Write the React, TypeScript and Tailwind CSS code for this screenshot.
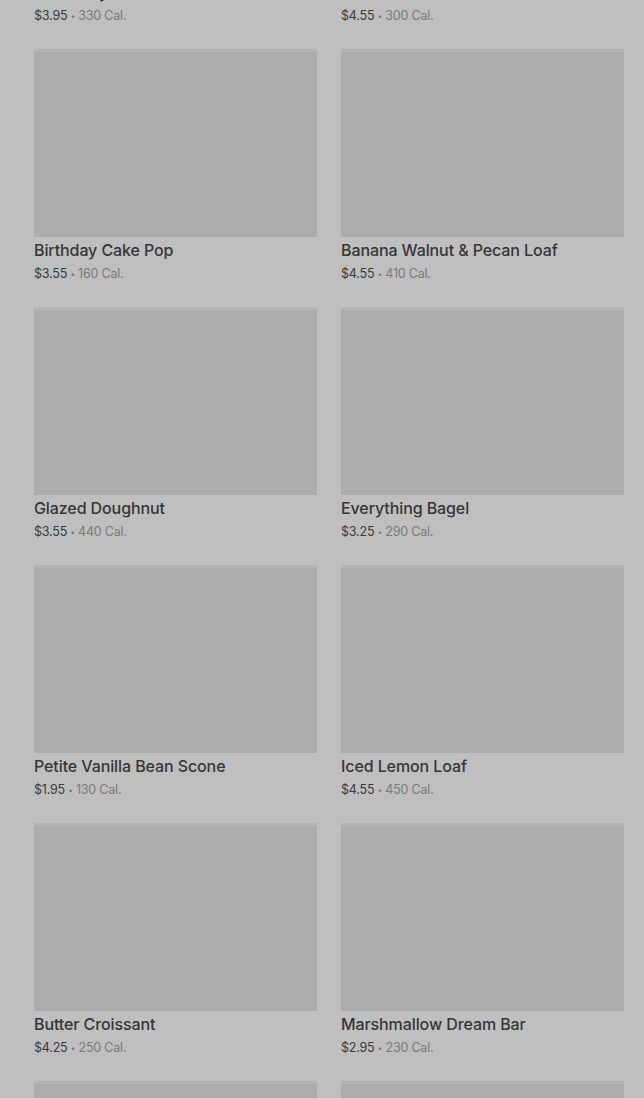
import React from 'react';

interface Item {
  name?: string;
  price?: string;
  cal?: number;
}

const items: Item[] = [
  { name: 'Blueberry Muffin', price: '$3.95', cal: 330 },
  { name: 'Chocolate Croissant', price: '$4.55', cal: 300 },
  { name: 'Birthday Cake Pop', price: '$3.55', cal: 160 },
  { name: 'Banana Walnut & Pecan Loaf', price: '$4.55', cal: 410 },
  { name: 'Glazed Doughnut', price: '$3.55', cal: 440 },
  { name: 'Everything Bagel', price: '$3.25', cal: 290 },
  { name: 'Petite Vanilla Bean Scone', price: '$1.95', cal: 130 },
  { name: 'Iced Lemon Loaf', price: '$4.55', cal: 450 },
  { name: 'Butter Croissant', price: '$4.25', cal: 250 },
  { name: 'Marshmallow Dream Bar', price: '$2.95', cal: 230 },
  {},
  {},
];

const ItemCard: React.FC<{ item: Item }> = ({ item }) => (
  <div className="flex flex-col pb-[25px]">
    <div className="h-[188px] bg-[#adadad] border-t-[3px] border-[#b4b4b4]" />
    {item.name && (
      <>
        <h3 className="mt-[2px] text-[16px] leading-[22px] font-medium text-[#363636] tracking-[-0.1px]">
          {item.name}
        </h3>
        <p className="mt-[4px] text-[12.5px] leading-[17px] text-[#3a3a3a] tracking-[-0.2px]">
          {item.price}
          <span className="text-[#7a7a7a]">
            {' '}
            <span className="inline-block align-middle text-[8px] leading-none -translate-y-[1px]">•</span>{' '}
            {item.cal} Cal.
          </span>
        </p>
      </>
    )}
  </div>
);

export default function App() {
  return (
    <div
      className="h-[1098px] w-[644px] overflow-hidden bg-[#bfbfbf]"
      style={{ fontFamily: 'Inter, "Noto Sans", sans-serif' }}
    >
      <div className="-mt-[209px] grid grid-cols-2 gap-x-[24px] pl-[34px] pr-[20px]">
        {items.map((item, i) => (
          <ItemCard key={i} item={item} />
        ))}
      </div>
    </div>
  );
}
